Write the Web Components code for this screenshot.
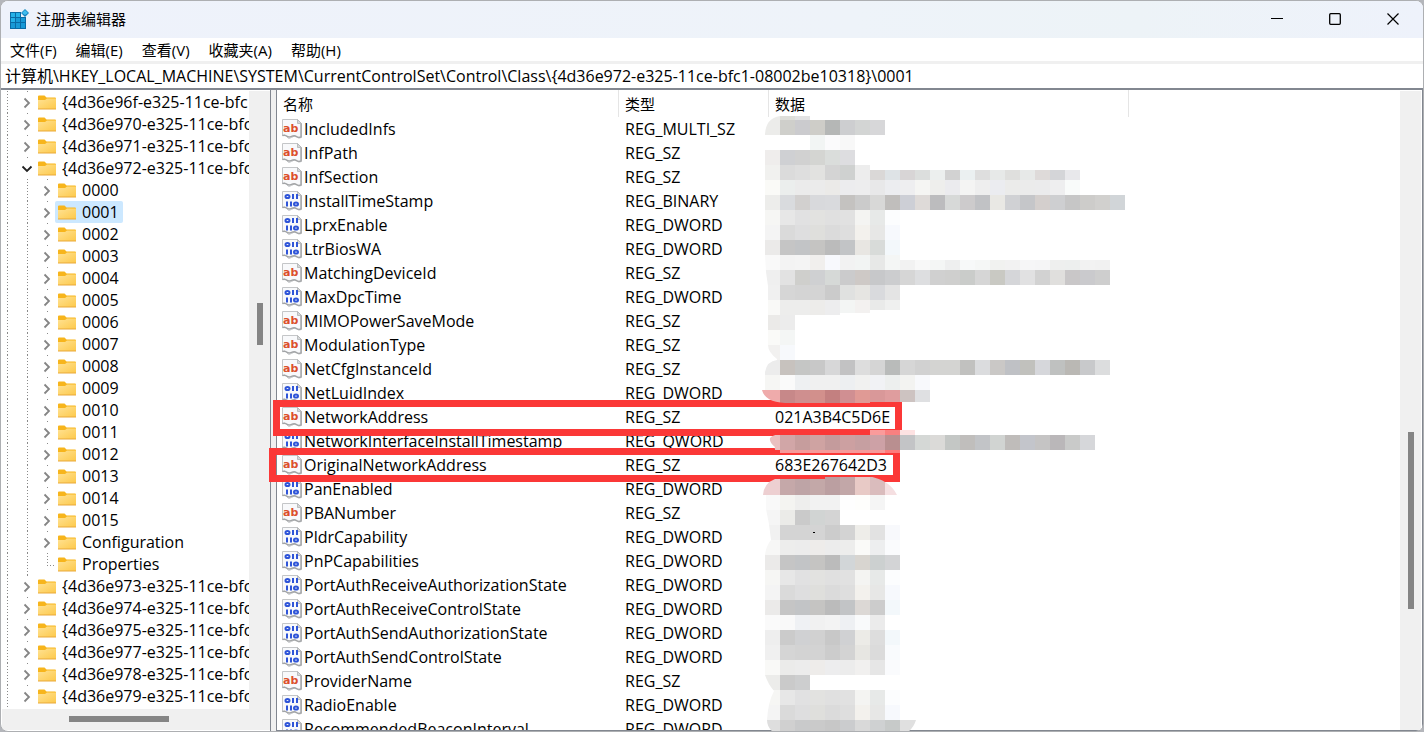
<!DOCTYPE html>
<html lang="zh-CN">
<head>
<meta charset="utf-8">
<title>注册表编辑器</title>
<style>
html, body { height: 100%; margin: 0; }
body {
  background: #b4b6bb;
  font: 15px/22px "Open Sans", "Noto Sans CJK SC", sans-serif;
  color: #000;
}
</style>
</head>
<body>
<reg-window>
  <reg-titlebar slot="title">注册表编辑器</reg-titlebar>
  <reg-menubar slot="menu"></reg-menubar>
  <reg-address slot="address" path="计算机\HKEY_LOCAL_MACHINE\SYSTEM\CurrentControlSet\Control\Class\{4d36e972-e325-11ce-bfc1-08002be10318}\0001"></reg-address>
  <reg-tree slot="tree"></reg-tree>
  <reg-values slot="values"></reg-values>
</reg-window>

<script>
function define(name, html, setup) {
  const template = document.createElement('template');
  template.innerHTML = html;
  customElements.define(name, class extends HTMLElement {
    connectedCallback() {
      if (this.shadowRoot) return;
      const root = this.attachShadow({ mode: 'open' });
      root.append(template.content.cloneNode(true));
      if (setup) setup.call(this, root);
    }
  });
}

define('reg-window', `
<style>
:host { display: flex; flex-direction: column; box-sizing: border-box; height: 100vh; overflow: hidden;
  border: 1px solid #adafb2; border-radius: 8px; background: #fff; }
.panes { flex: 1; min-height: 0; display: grid; grid-template-columns: 270px 5px minmax(0, 1fr);
  grid-template-rows: minmax(0, 1fr); border-top: 2px solid #828790; }
.splitter { background: #f0f0f0; }
</style>
<slot name="title"></slot>
<slot name="menu"></slot>
<slot name="address"></slot>
<main class="panes"><slot name="tree"></slot><div class="splitter"></div><slot name="values"></slot></main>`);

define('reg-titlebar', `
<style>
:host { display: flex; align-items: center; height: 35px; padding: 0 1px 2px 0; flex: none; background: linear-gradient(90deg, #eef2fb, #eef3f9 60%, #edf3f7 80%, #eef2fb); }
.logo { margin: 0 7px 0 8px; }
h1 { flex: 1; margin: 0; font-size: 15px; line-height: 20px; font-weight: 400; }
button { width: 58px; height: 35px; border: 0; padding: 0; background: none; display: grid; place-items: center; }
svg { display: block; fill: none; stroke: #000; }
</style>
<svg class="logo" width="20" height="20" viewBox="0 0 20 20" style="stroke:none">
  <path fill="#0a6ba5" d="M1 3h12v5h4v12H1z"/>
  <g fill="#25b1e8"><path d="M2 4h4v4H2zM7 4h4v4H7zM2 9h4v4H2z"/></g>
  <g fill="#1899d6"><path d="M7 9h4v4H7zM12 9h4v4h-4zM2 14h4v5H2zM7 14h4v5H7zM12 14h4v5h-4z"/></g>
  <path fill="#e9f3fa" d="M12 0h8v8h-8z"/>
  <path fill="#1480bd" d="M16 0l4 4-4 4-4-4z"/><path fill="#3fbdee" d="M16 1l3 3-3 2-3-2z"/>
</svg>
<h1><slot></slot></h1>
<button aria-label="最小化"><svg width="12" height="12"><path d="M0 5.5h12"/></svg></button>
<button aria-label="最大化"><svg width="12" height="12"><rect x=".7" y=".7" width="10.6" height="10.6" rx="1" stroke-width="1.3"/></svg></button>
<button aria-label="关闭"><svg width="12" height="12"><path stroke-width="1.2" d="M.5.5l11 11M11.5.5l-11 11"/></svg></button>`);

define('reg-menubar', `
<style>
:host { display: block; flex: none; background: #fff; border-bottom: 3px solid #f0f0f0; }
nav { display: flex; gap: 19px; padding: 1px 9px 0; }
button { font: inherit; color: inherit; border: 0; padding: 0; background: none; }
</style>
<nav><button>文件(F)</button><button>编辑(E)</button><button>查看(V)</button><button>收藏夹(A)</button><button>帮助(H)</button></nav>`);

define('reg-address', `
<style>
:host { display: block; flex: none; }
input { display: block; box-sizing: border-box; width: 100%; height: 24px; border: 0; padding: 0 4px 2px; outline: 0;
  font: inherit; font-size: 16px; color: inherit; background: #fff; }
</style>
<input aria-label="地址" spellcheck="false">`, function (root) {
  root.querySelector('input').value = this.getAttribute('path');
});

define('reg-scrollbar', `
<style>
:host { display: block; position: relative; background: #f0f0f0; }
.thumb { position: absolute; background: #858585; }
:host([vertical]) .thumb { left: 8px; width: 6px; top: var(--start); height: var(--size); }
:host(:not([vertical])) .thumb { top: 7px; height: 6px; left: var(--start); width: var(--size); }
</style>
<div class="thumb"></div>`);

define('reg-key', `
<style>
:host { display: flex; height: 22px; white-space: nowrap; font-size: 16px; --dots: repeating-linear-gradient(#8a8a8a 0 1px, transparent 1px 3px); }
.root, .guide, .toggle { flex: none; height: 22px; background: var(--dots) no-repeat; }
.root { width: 15px; background-size: 1px 100%; background-position: 5px 0; }
.guide { display: none; width: 20px; background-size: 1px 100%; background-position: 10px 0; }
:host([child]) .guide { display: block; }
.toggle { width: 18px; border: 0; padding: 2px 0 0 3px; display: flex; align-items: center;
  background-size: 1px 2px; background-position: 10px 0; }
:host([leaf]) .toggle { background: var(--dots) no-repeat 10px 0 / 1px 12px, repeating-linear-gradient(90deg, #8a8a8a 0 1px, transparent 1px 3px) no-repeat 10px 12px / 8px 1px; }
:host([leaf]) .toggle svg { display: none; }
.label { display: flex; align-items: center; gap: 6px; padding: 0 4px 0 3px; border-radius: 2px; }
:host([selected]) .label { background: #cce8ff; }
.arrow { fill: none; stroke: #858585; stroke-width: 1.8; }
:host([open]) .arrow { transform: rotate(90deg); stroke: #222; }
</style>
<span class="root"></span><span class="guide"></span>
<button class="toggle" aria-label="展开"><svg class="arrow" width="14" height="14" viewBox="0 0 14 14"><path d="M4.500 2.500L9 7l-4.500 4.500"/></svg></button>
<span class="label">
<svg width="18" height="16" viewBox="0 -1 18 16">
  <defs><linearGradient id="g" x2="1" y2="1"><stop stop-color="#ffe293"/><stop offset="1" stop-color="#fdc94b"/></linearGradient></defs>
  <path fill="#f7b51c" d="M0 1.500q0-1 1-1h5.500l2 2H17q1 0 1 1V6H0z"/>
  <path fill="url(#g)" d="M0 5h7l2-1.500h9V14H0z"/><path fill="#e9a93a" d="M0 13.500h18v1H0z"/>
</svg>
<slot></slot></span>`);

define('reg-tree', `
<style>
:host { display: grid; grid-template: minmax(0, 1fr) 21px / minmax(0, 1fr) 21px; overflow: hidden; padding: 1px 0 1px 1px; box-sizing: border-box; border-right: 1px solid #828790; }
.keys { overflow: hidden; }
.v { --start: 212px; --size: 42px; }
.h { grid-column: 1 / 3; --start: 67px; --size: 100px; }
</style>
<div class="keys"></div>
<reg-scrollbar class="v" vertical></reg-scrollbar>
<reg-scrollbar class="h"></reg-scrollbar>`, function (root) {
  const keys = root.querySelector('.keys');
  const add = (text, ...flags) => {
    const key = document.createElement('reg-key');
    key.textContent = text;
    flags.forEach(flag => key.setAttribute(flag, ''));
    keys.append(key);
  };
  const guid = id => `{4d36e${id}-e325-11ce-bfc`;
  ['96f', '970', '971'].forEach(id => add(guid(id)));
  add(guid('972'), 'open');
  for (let i = 0; i < 16; i++) {
    const name = String(i).padStart(4, '0');
    if (i === 1) add(name, 'child', 'selected'); else add(name, 'child');
  }
  add('Configuration', 'child');
  add('Properties', 'child', 'leaf');
  ['973', '974', '975', '977', '978', '979'].forEach(id => add(guid(id)));
});

define('value-icon', `
<style>
:host { display: block; flex: none; width: 20px; height: 20px; }
svg { display: block; }
.ab, .bin { display: none; }
:host([kind="ab"]) .ab, :host([kind="bin"]) .bin { display: block; }
text { font: 700 11px/11px "DejaVu Sans", sans-serif; fill: #dc4f2c; }
</style>
<svg width="20" height="20" viewBox="0 0 20 20">
  <path fill="#f8f9fb" stroke="#c4c6c8" d="M.5.5h15l4 4v14q-3 1.500-5-.5t-5 .5-5-1-4-.5z"/>
  <path fill="none" stroke="#a2a4a6" stroke-width="1.400" d="M.5 16.500q3-.5 4.500.8t4.500 0 5 .2 4.500.4V4.500"/>
  <path fill="#d5d7d9" stroke="#b0b2b4" stroke-width=".8" d="M15.500.5v4h4z"/>
  <text class="ab" x="1" y="13">ab</text>
  <g class="bin" fill="none" stroke="#2f55d8" stroke-width="2">
    <ellipse cx="5.500" cy="5.500" rx="2" ry="1.600"/><path d="M11 3v5M15 3v5"/>
    <path d="M5 10.500v5M9 10.500v5"/><ellipse cx="14" cy="13" rx="2" ry="1.600"/>
  </g>
</svg>`);

/* Pixelated cover over the data column: 15px cells, each row starting at its left edge. */
define('reg-mosaic', `
<style>:host { display: block; } svg { display: block; }</style>
<svg width="364" height="616" viewBox="762 116 364 616" shape-rendering="crispEdges">
  <clipPath id="c"><path d="M765 134Q766 118 780 116H810V119H1130V476H868Q890 480 897 495H1130V720H916Q914 727 908 732H773Q767 727 767 720Q768 702 774 691Q768 684 765 675V555Q766 546 771 540L769 524L766 509V495H763Q764 483 775 479L815 479V455H785Q773 452 775 447Q769 442 770 438Q773 434 785 434V403Q765 402 762 390H765V372Q767 361 777 360V359Q768 352 768 345V286L766 272L765 255Z"/></clipPath>
  <g id="cells" clip-path="url(#c)"></g>
  <path d="M813 532h2v1h-2z"/>
</svg>`, function (root) {
  const light = 'f6f6f4 e7e7e7 e1e1e2 e2e2e0 e0e0e0 e1e1e1 f4f4f2 e7e9e8 fcfdfe';
  const mid = 'f4f4f4 dadada dededf dfdfdc dbdbdb dedede f3f1ed e7e7e6 f7f9fd';
  const dark = 'ebeae9 c5c5c5 c2c4c6 c5c4c2 bbbbbb c2c4c6 ';
  /* [top, height, first column, colours] */
  const rows = [
    [116, 4, 0, 'ececea deded9 e2e2e3'],
    [120, 15, 0, 'ececea cfcfcb cbcbce cecdc8 b5b7b6 cdced0 d3d5d4 d7d7d9'],
    [135, 15, 3, 'f2f5f4 fbfbfc f8f8f8'],
    [150, 15, 0, 'efedec cfd0d3 d1d1d1 d4d5d2 dadddb dddde0'],
    [165, 15, 0, 'f1f1ef dbdbdb dedede e2e2e0 d4d4d4 cfd1d0 ededed'],
    [170, 10, 7, 'dad8d7 dee3e6 d8d5d6 dcdedd ecefee d2d2d2 ebf0f1 dedede e7e9e8 dfdfdd e7e9e8 dedad9 d4d5d8 e8e8eb'],
    [180, 15, 0, 'fafaf7 ebeeed ebebeb ebebeb ebeae8 ececee ededee e8e8e9 ecedf0 eeeef0 f5f5f3 eeeeec ebebee f4f4f3 eeeeee ebecf0 ebebea ebebeb ebebec eeeeef f9fbfa'],
    [195, 15, 0, 'ededeb d9dbde d2d0cf d8d9dc d9dadd c4c2c0 cbcbcb d8d8d7 c0bebc cdcfd6 dedad8 bcbcbe d7d9d8 cdcbcc c1c2c5 e9e8e4 d0d1d4 c5c6c9 d4cfcd cecfd1 c6c6c6 cdccca d1d0ce d1d5d8'],
    [210, 15, 0, light], [225, 15, 0, mid], [240, 15, 0, dark + 'e8e6e2 d8dbd9 f3f8fb'],
    [255, 15, 0, 'f9f9f9 f3f3f3 f4f4f4 f1efed f8f9fd f2f2f2 f2f4f3 e7e8e7 f4f6f5'],
    [260, 10, 9, 'f2f2f2 f8f8f8 f4f6f5 eeefef f7f9f9 f5f7f6 f1f2f0 f2f2f2 f6f6f7 f5f5f6 eeefee edefee f2f2f2 f1f1f1'],
    [270, 15, 0, 'efefef e2e2e2 cfcfcc cfd0d2 d6d9d7 cbcbcc cec9c6 c7c8ca cccdcf d6d6d6 dddee0 d0d0d0 cfcfce caccca d6d6d6 c9c9c3 d5d6d9 e1e1e2 d2d2d2 e0dfdd c9c7c8 cacacd cecece'],
    [285, 15, 0, 'f0f0f0 d6d6d6 d4d4d4 d4d4d4 cbcbcb e0e1e0 e6e5e2 d9dadd e4e4e4'],
    [300, 15, 0, 'f9f9f7 ededec ededec edecea ededee'], [300, 13, 5, 'f3f5f4 f3f1f0'], [300, 10, 7, 'e9eae9 eff0ef'],
    [315, 15, 0, 'ebeae8 ececec'], [330, 15, 0, 'fafaf8 f4f6f5'], [345, 15, 0, 'f2f1f0 f7f9fc'],
    [360, 15, 0, 'ececec c7c2be c5c6c5 c8c8c8 d7d7d8 c2c2c3 dddddd d5d5d5 b9bbba d6d6d6 d1d1d1 d4d4d2 d4d4d2 c1c1bf dbdcde cac8c6 bfc1c5 c1c1bd d6d7db bfc1c0 bab8b4 c8c9cb dcddde'],
    [375, 15, 0, 'f6f6f4 fafafa eef0f2 f0f0f0 f0f0f0 edeff1 f1f1f0 f1f2f5 edefee f3f3f1 f8f9fc'],
    [390, 12, -1, 'efabab'],
    [390, 13, 0, 'efabab c78889 cf8f8f d2908c c38080 d08f92 e09a95'],
    [390, 12, 7, 'd99899 df9d9e cdc3c1 dfe0e2'],
    [430, 5, 7, 'fa9b9b f98080 fde2e2'],
    [435, 15, 0, 'eac0c0 d1a6a7 c69d9d cfa3a2 c49b9c cca0a1 c69fa1 cda1a6 b98f90 c3c4c6 d5d8d6 dbdad8 c4c7c5 c0bebc c2c4c7 d1d4d2 bfbcba c3c5cb c5c4c4 bab7b9 c9cac9 d6d7da'],
    [450, 3, 1, 'f59a9a f59a9a f59a9a f59a9a f59a9a f59a9a f59a9a fc7b7b'],
    [477, 18, -1, 'edcfd1'],
    [479, 16, 0, 'edcfd1 c5a8a9 bea4a6 c3a8a8'],
    [477, 18, 4, 'bb9fa1 c2a7a8 e8cac6 dabcbd f5dfe1'],
    [495, 15, 0, 'f9f9f9 f4f4f1 eeeeed f2f2f2 f2f2f2 fefefe fefefc f5f5f5'],
    [510, 15, 0, 'f5f5f5 ebebe8 cacaca d1d4d3 d4d4d4'],
    [525, 15, 0, 'f1f1f1 d4d4d4 d4d4d4 d4d4d4 cccccc d3d3d3 eeede9 e2e2e2 f8f9fc'],
    [540, 15, 0, 'f7f7f6 ededec ececec eeecea ececec ededec fafaf8 edeeef fafbfd'],
    [555, 15, 0, 'ebeae9 c5c5c5 c2c4c6 c5c4c2 bbbbbb d2d6d8 d8d5d0 ccd0d0 d3d4d6'],
    [570, 15, 0, light], [585, 15, 0, mid], [600, 15, 0, dark + 'dcd8d5 cccccc f3f8fb'],
    [615, 15, 0, 'fafafa f9f9f9 eff1f4 f1f1f1 f3f3f3 eef0f3 f9fafb ebebeb'],
    [630, 15, 0, 'eeeeee cbcbcb d0d1d3 d1d1d1 c8c8c8 d0d1d3 ecebe7 dddddd f3f8fb'],
    [645, 15, 0, 'f0f0f0 d5d5d5 d3d3d3 d3d3d3 cccccc d3d3d3 e7e6e2 dbdbdb f9fbfd'],
    [660, 15, 0, 'f9f9f7 ebebea ececec eeecea ededee ececec f1f0ef e6e6e6 fafbfd'],
    [675, 15, 0, 'ececea cacaca cdcecf'],
    [690, 15, 0, light], [705, 15, 0, mid],
    [720, 12, 0, 'dedede d0d0d0 c9cacb cacaca c7c7c7 cbccce d9d9d9 cfd1d2 c7cac9 e0e0e0 e0e0e0']
  ];
  root.querySelector('#cells').innerHTML = rows.map(([y, h, first, colours]) =>
    colours.split(' ').map((c, i) => `<rect x="${765 + 15 * (first + i)}" y="${y}" width="15" height="${h}" fill="#${c}"/>`).join('')).join('');
});

define('reg-values', `
<style>
:host { display: grid; grid-template: minmax(0, 1fr) / minmax(0, 1fr) 22px; position: relative;
  box-sizing: border-box; border-left: 1px solid #828790; border-right: 1px solid #828790; border-bottom: 1px solid #828790; }
.list { overflow: hidden; }
reg-scrollbar { margin: 1px 1px 0 0; --start: 341px; --size: 177px; }
table { width: 100%; table-layout: fixed; border-collapse: separate; border-spacing: 0; white-space: nowrap; }
.name { width: 342px; } .type { width: 150px; } .data { width: 360px; }
th, td { padding: 0 0 0 6px; height: 24px; text-align: left; font-weight: 400; line-height: 24px; box-sizing: border-box; }
th { height: 27px; border-right: 1px solid #e5e5e5; }
th:last-child { border: 0; }
td { font-size: 16px; }
td:first-child { padding-left: 5px; }
.cell { display: flex; align-items: center; gap: 2px; }
.mark { position: absolute; border: 7px solid #fb3837; }
.first { left: -4px; top: 310px; width: 615px; height: 22px; }
.second { left: -8px; top: 358px; width: 617px; height: 20px; }
reg-mosaic { position: absolute; left: 485px; top: 26px; }
</style>
<div class="list"><table>
<colgroup><col class="name"><col class="type"><col class="data"><col></colgroup>
<thead><tr><th>名称</th><th>类型</th><th>数据</th><th></th></tr></thead>
<tbody></tbody></table></div>
<reg-scrollbar vertical></reg-scrollbar>
<div class="mark first"></div><div class="mark second"></div>
<reg-mosaic></reg-mosaic>`, function (root) {
  const values = `IncludedInfs MULTI_SZ
InfPath SZ
InfSection SZ
InstallTimeStamp BINARY
LprxEnable DWORD
LtrBiosWA DWORD
MatchingDeviceId SZ
MaxDpcTime DWORD
MIMOPowerSaveMode SZ
ModulationType SZ
NetCfgInstanceId SZ
NetLuidIndex DWORD
NetworkAddress SZ 021A3B4C5D6E
NetworkInterfaceInstallTimestamp QWORD
OriginalNetworkAddress SZ 683E267642D3
PanEnabled DWORD
PBANumber SZ
PldrCapability DWORD
PnPCapabilities DWORD
PortAuthReceiveAuthorizationState DWORD
PortAuthReceiveControlState DWORD
PortAuthSendAuthorizationState DWORD
PortAuthSendControlState DWORD
ProviderName SZ
RadioEnable DWORD
RecommendedBeaconInterval DWORD`;
  root.querySelector('tbody').innerHTML = values.split('\n').map(line => {
    const [name, type, data = ''] = line.split(' ');
    return `<tr><td><span class="cell"><value-icon kind="${type.endsWith('SZ') ? 'ab' : 'bin'}"></value-icon>${name}</span></td><td>REG_${type}</td><td>${data}</td><td></td></tr>`;
  }).join('');
});
</script>
</body>
</html>
